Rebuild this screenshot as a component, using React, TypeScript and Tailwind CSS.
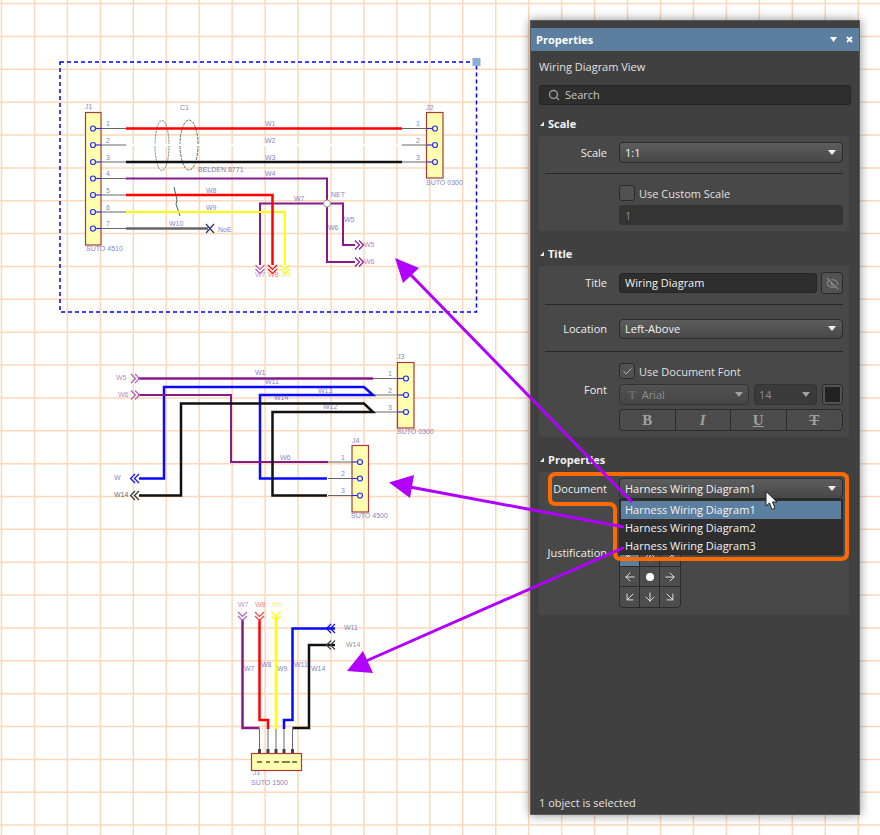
import { ReactNode } from "react";
import {
  ArrowDown,
  ArrowDownLeft,
  ArrowDownRight,
  ArrowLeft,
  ArrowRight,
  ArrowUp,
  ArrowUpLeft,
  ArrowUpRight,
  Check,
  EyeOff,
  Search,
} from "lucide-react";

const RED = "#ff0000";
const PURPLE = "#861a8c";
const BLUE = "#0a0aff";
const BLACK = "#111111";
const YELLOW = "#ffff00";
const GREY = "#666666";
const LABEL = "#5050b0";

const gridX = Array.from({ length: 27 }, (_, i) => 1.5 + i * 32.95);
const gridY = Array.from({ length: 26 }, (_, i) => 3.6 + i * 32.86);

// wires: [colour, width, points]
const wires: [string, number, string][] = [
  // top diagram
  [RED, 2.5, "126,128.5 402,128.5"],
  ["#ffffff", 2, "126,145 402,145"],
  [BLACK, 2.5, "126,162 402,162"],
  [PURPLE, 2, "126,178.5 327,178.5 327,262 355,262"],
  [PURPLE, 2, "260,265 260,203.5 343,203.5 343,245 355,245"],
  [YELLOW, 2, "126,212 285,212 285,265"],
  [RED, 2.5, "126,195 272.5,195 272.5,265"],
  [GREY, 2.5, "126,228.5 208,228.5"],
  // middle diagram
  [PURPLE, 2.5, "138,378.5 373,378.5"],
  [BLUE, 2.5, "139,478.5 164,478.5 164,387 364,387 373,395 260,395 260,478.5 327,478.5"],
  [PURPLE, 2, "138,395 231,395 231,462 328,462"],
  [BLACK, 2.5, "139,495.5 181,495.5 181,403.5 364,403.5 373,412 272.5,412 272.5,495.5 327,495.5"],
  // bottom diagram
  [PURPLE, 2.5, "242.5,619 242.5,728 259.5,728"],
  [RED, 2.5, "259.5,619 259.5,720 268,720 268,729"],
  [YELLOW, 2.5, "276,617 276,729"],
  [BLUE, 2.5, "335,628.5 292.5,628.5 292.5,720 284,720 284,729"],
  [BLACK, 2.5, "335,645 309,645 309,728 292.5,728"],
];

// thin grey stubs
const stubs = [
  "101,128.5 126,128.5", "101,145 126,145", "101,162 126,162", "101,178.5 126,178.5",
  "101,195 126,195", "101,212 126,212", "101,228.5 126,228.5",
  "402,128.5 427,128.5", "402,145 427,145", "402,162 427,162",
  "373,378.5 398,378.5", "373,395 398,395", "373,412 398,412",
  "328,462 352,462", "328,478.5 352,478.5", "328,495.5 352,495.5",
  "259.5,729 259.5,752", "268,729 268,752", "276,729 276,752", "284,729 284,752", "292.5,729 292.5,752",
];

const connectors = [
  { x: 85.5, y: 112.5, w: 15.5, h: 132.5 },
  { x: 426.5, y: 112.5, w: 16.5, h: 65.5 },
  { x: 397.5, y: 362.5, w: 16.5, h: 65.5 },
  { x: 352, y: 445.5, w: 16.5, h: 66.5 },
  { x: 251.5, y: 753.5, w: 50, h: 17 },
];

const pins: [number, number, number][] = [
  ...[128.5, 145, 162, 178.5, 195, 212, 228.5].map((y) => [93, y, 101] as [number, number, number]),
  ...[128.5, 145, 162].map((y) => [435, y, 427] as [number, number, number]),
  ...[378.5, 395, 412].map((y) => [406, y, 398] as [number, number, number]),
  ...[462, 478.5, 495.5].map((y) => [360, y, 352] as [number, number, number]),
];

// chevrons: [x, y, direction, colour]
const chevrons: [number, number, "r" | "l" | "d", string][] = [
  [355, 245, "r", PURPLE],
  [355, 262, "r", PURPLE],
  [260, 265, "d", "#b060b8"],
  [272.5, 265, "d", RED],
  [285, 265, "d", YELLOW],
  [131, 378.5, "r", "#b060b8"],
  [131, 395, "r", "#b060b8"],
  [139, 478.5, "l", BLUE],
  [139, 495.5, "l", "#333333"],
  [242.5, 612, "d", "#b060b8"],
  [259.5, 612, "d", "#ff4040"],
  [276, 612, "d", YELLOW],
  [335, 628.5, "l", BLUE],
  [335, 645, "l", "#444444"],
];

const labels: [number, number, string, string?][] = [
  [85, 109, "J1"], [180, 110, "C1"], [426, 110, "J2"],
  [106, 126, "1"], [106, 143, "2"], [106, 160, "3"], [106, 176, "4"], [106, 193, "5"], [106, 210, "6"], [106, 226, "7"],
  [416, 126, "1"], [416, 143, "2"], [416, 160, "3"],
  [265, 126, "W1"], [265, 143, "W2"], [265, 160, "W3"], [265, 176, "W4"],
  [206, 193, "W8"], [206, 210, "W9"], [169, 226, "W10"], [294, 201, "W7"], [331, 197, "NET"],
  [344, 222, "W5"], [328, 230, "W6"], [218, 232, "NoE"],
  [198, 172, "BELDEN 8771", "#444488"], [86, 251, "SUTO 4510"], [426, 185, "SUTO 0300"],
  [364, 247, "W5", "#a050b0"], [364, 264, "W6", "#a050b0"],
  [255, 277, "W7", "#c070d0"], [268, 277, "W8", "#ff5050"], [281, 277, "W9", "#e8e840"],
  [255, 375, "W1"], [265, 384, "W11"], [318, 393, "W13"], [274, 400, "W14"], [323, 409, "W12"],
  [388, 376, "1"], [388, 393, "2"], [388, 410, "3"], [341, 460, "1"], [341, 476, "2"], [341, 493, "3"],
  [280, 460, "W6"], [116, 380, "W5", "#a050b0"], [118, 397, "W6", "#a050b0"],
  [114, 480, "W"], [114, 497, "W14", "#333333"],
  [397, 359, "J3"], [352, 443, "J4"], [397, 434, "SUTO 0300"], [351, 518, "SUTO 4500"],
  [238, 607, "W7", "#b060b8"], [255, 607, "W8", "#ff5050"], [272, 607, "W9", "#e8e840"],
  [344, 630, "W11"], [346, 647, "W14", "#666666"],
  [244, 671, "W7"], [261, 667, "W8"], [277, 671, "W9"], [294, 667, "W11"], [311, 671, "W14"],
  [253, 775, "J1"], [251, 785, "SUTO 1500"],
];

function Chevron({ x, y, dir, color }: { x: number; y: number; dir: "r" | "l" | "d"; color: string }) {
  const rotate = dir === "r" ? 0 : dir === "l" ? 180 : 90;
  return (
    <g transform={`translate(${x} ${y}) rotate(${rotate})`} fill="none" stroke={color} strokeWidth="1.2">
      <path d="M0 -4.5 L4.5 0 L0 4.5" />
      <path d="M4 -4.5 L8.5 0 L4 4.5" />
    </g>
  );
}

function Canvas() {
  return (
    <svg className="absolute inset-0" width="880" height="835">
      {gridX.map((x) => (
        <line key={x} x1={x} x2={x} y1="0" y2="835" stroke="#fdd8ba" strokeWidth="1.5" />
      ))}
      {gridY.map((y) => (
        <line key={y} x1="0" x2="880" y1={y} y2={y} stroke="#fdd8ba" strokeWidth="1.5" />
      ))}

      <rect x="60" y="62" width="416.5" height="250" fill="none" stroke="#0000ff" strokeWidth="1.5" strokeDasharray="4 3" />
      <rect x="473" y="58.5" width="7" height="7" fill="#86b2d6" stroke="#8fa8e0" />

      <ellipse cx="162" cy="145.5" rx="7" ry="25" fill="none" stroke="#5a7a90" strokeDasharray="2 1" />
      <ellipse cx="189" cy="145" rx="9" ry="25" fill="none" stroke="#4f7a4f" strokeDasharray="3 1" />
      <path d="M174 187 L177 200 L176 204 L180 216" fill="none" stroke="#3c6a5a" />

      {stubs.map((p) => (
        <polyline key={p} points={p} fill="none" stroke="#666666" />
      ))}
      {wires.map(([color, width, points]) => (
        <polyline key={points} points={points} fill="none" stroke={color} strokeWidth={width} />
      ))}

      <path d="M206 224 L214 233 M214 224 L206 233" stroke="#333366" strokeWidth="1.3" />
      <circle cx="327" cy="203.5" r="3.5" fill="#ffffff" stroke="#999999" />

      {chevrons.map(([x, y, dir, color]) => (
        <Chevron key={`${x}-${y}`} x={x} y={y} dir={dir} color={color} />
      ))}

      {connectors.map((c) => (
        <rect key={c.x} x={c.x} y={c.y} width={c.w} height={c.h} fill="#ffffb0" stroke="#a83a3a" strokeWidth="1.2" />
      ))}
      {pins.map(([x, y, edge]) => (
        <g key={`${x}-${y}`} fill="none" stroke="#2a2aff" strokeWidth="1.2">
          <circle cx={x} cy={y} r="2.5" fill="#ffffb0" />
          <line x1={x < edge ? x + 2.5 : x - 2.5} x2={edge} y1={y} y2={y} />
        </g>
      ))}
      {[259.5, 268, 276, 284, 292.5].map((x) => (
        <rect key={x} x={x - 1.5} y="749" width="3" height="4" fill="#444444" />
      ))}
      <path d="M257 762 H262 M266 762 H270 M274 762 H279 M282 762 H290 M292 762 H297" stroke="#555533" strokeWidth="1.5" />

      {labels.map(([x, y, text, color], i) => (
        <text
          key={i}
          x={x}
          y={y}
          fontSize="7"
          fill={color ?? LABEL}
          opacity="0.7"
          className="font-['Liberation_Sans',sans-serif]"
        >
          {text}
        </text>
      ))}
    </svg>
  );
}

function Overlay() {
  return (
    <svg className="absolute inset-0 z-20 pointer-events-none" width="880" height="835">
      <path
        d="M556 474 H841 Q847 474 847 480 V553 Q847 559 841 559 H621 Q615 559 615 553 V510 Q615 504 609 504 H556 Q550 504 550 498 V480 Q550 474 556 474 Z"
        fill="none"
        stroke="#ff6a00"
        strokeWidth="4"
      />
      <g stroke="#b000ff" strokeWidth="3">
        <line x1="632" y1="502" x2="409" y2="273" />
        <line x1="624" y1="527" x2="410" y2="487" />
        <line x1="624" y1="547.5" x2="366" y2="661" />
      </g>
      <g fill="#b000ff">
        <polygon points="395,258 419,268 403,283" />
        <polygon points="389,482.5 414,475 410,498" />
        <polygon points="347,671 363,651 373,673" />
      </g>
      <path
        d="M766 491.5 L766 506 L769.5 503 L772 509.5 L775 508.2 L772.5 502 L777 502 Z"
        fill="#ffffff"
        stroke="#222222"
        strokeWidth="1"
      />
    </svg>
  );
}

function Caret({ muted }: { muted?: boolean }) {
  return (
    <svg width="8" height="5" viewBox="0 0 8 5">
      <path d="M0 0 H8 L4 5 Z" fill={muted ? "#a0a0a0" : "#f0f0f0"} />
    </svg>
  );
}

function Select({ value, className = "h-[21px]" }: { value: string; className?: string }) {
  return (
    <div className={`${className} w-full flex items-center justify-between pl-[5px] pr-[6px] rounded-[4px] border border-[#2b2b2b] bg-gradient-to-b from-[#5e5e5e] to-[#474747] text-[#f2f2f2]`}>
      <span>{value}</span>
      <Caret />
    </div>
  );
}

function Row({ label, children, className = "" }: { label: string; children: ReactNode; className?: string }) {
  return (
    <div className={`flex items-center pl-0 ${className}`}>
      <div className="w-[68px] text-right text-[#eeeeee] mr-[12px]">{label}</div>
      <div className="w-[224px]">{children}</div>
    </div>
  );
}

function Divider({ className }: { className: string }) {
  return <div className={`h-px mx-[6px] bg-[#262626] ${className}`} />;
}

function SectionHead({ title, className }: { title: string; className: string }) {
  return (
    <div className={`flex items-end pb-[5px] ${className}`}>
      <div className="flex items-center h-[16px] font-bold text-[#f2f2f2]">
        <svg width="9" height="6" viewBox="0 0 9 6">
          <path d="M1 6 H5 V1.5 Z" fill="#e8e8e8" />
        </svg>
        {title}
      </div>
    </div>
  );
}

function Checkbox({ checked, label }: { checked?: boolean; label: string }) {
  return (
    <div className="flex items-center h-[16px]">
      <div className="w-[16px] h-[16px] flex items-center justify-center rounded-[3px] border border-[#2b2b2b] bg-[#515151]">
        {checked && <Check size={11} color="#e8e8e8" strokeWidth={1.5} />}
      </div>
      <span className="ml-[4px] text-[#e0e0e0]">{label}</span>
    </div>
  );
}

function Card({ className, children }: { className: string; children: ReactNode }) {
  return <div className={`w-[310px] rounded-[3px] bg-[#484848] ${className}`}>{children}</div>;
}

const arrowCells = [ArrowUpLeft, ArrowUp, ArrowUpRight, ArrowLeft, null, ArrowRight, ArrowDownLeft, ArrowDown, ArrowDownRight];

function JustifyGrid() {
  return (
    <div className="w-[62px] h-[62px] grid grid-cols-3 grid-rows-3 rounded-[4px] overflow-hidden border border-[#2b2b2b] bg-[#4d4d4d]">
      {arrowCells.map((Icon, i) => (
        <div
          key={i}
          className={`flex items-center justify-center border-[#2b2b2b] ${i % 3 !== 2 ? "border-r" : ""} ${i < 6 ? "border-b" : ""} ${i === 0 ? "bg-[#5d7f9f]" : ""}`}
        >
          {Icon ? <Icon size={14} color="#f4f4f4" strokeWidth={1.5} /> : <div className="w-[8px] h-[8px] rounded-full bg-white" />}
        </div>
      ))}
    </div>
  );
}

function Panel() {
  return (
    <div className="relative w-[330px] h-[795px] flex flex-col border border-[#5c5c5c] bg-[#404040] pt-[7px] text-[11px] leading-[17px] shadow-[0_0_10px_rgba(0,0,0,0.45)]">
      <div className="h-[23px] shrink-0 flex items-center justify-between pl-[5px] pr-[6px] pb-[1px] bg-[#5d7f9f] text-white font-bold">
        <span>Properties</span>
        <div className="flex items-center gap-[9px]">
          <svg width="7" height="5" viewBox="0 0 7 5">
            <path d="M0 0 H7 L3.5 5 Z" fill="#ffffff" />
          </svg>
          <svg width="7" height="7" viewBox="0 0 7 7">
            <path d="M1 1 L6 6 M6 1 L1 6" stroke="#ffffff" strokeWidth="1.8" />
          </svg>
        </div>
      </div>

      <div className="px-[8px] flex-1 flex flex-col">
        <div className="h-[34px] pb-[3px] flex items-center text-[#e0e0e0]">Wiring Diagram View</div>
        <div className="h-[20px] flex items-center pl-[8px] pb-[1px] rounded-[3px] border border-[#262626] bg-[#2e2e2e] text-[#c8c8c8]">
          <Search size={12} color="#9a9a9a" strokeWidth={3} />
          <span className="ml-[5px]">Search</span>
        </div>

        <SectionHead title="Scale" className="h-[31px]" />
        <Card className="h-[95px] pt-[6px]">
          <Row label="Scale">
            <Select value="1:1" />
          </Row>
          <Divider className="mt-[10px]" />
          <div className="mt-[11px] pl-[80px]">
            <Checkbox label="Use Custom Scale" />
            <div className="mt-[4px] w-[224px] h-[20px] pl-[6px] flex items-center rounded-[3px] bg-[#343434] text-[#8a8a8a]">1</div>
          </div>
        </Card>

        <SectionHead title="Title" className="h-[35px]" />
        <Card className="h-[171px] pt-[6px]">
          <Row label="Title" className="[&>div:first-child]:pb-[2px]">
            <div className="flex items-center justify-between">
              <div className="w-[198px] h-[20px] pl-[5px] pb-[1px] flex items-center rounded-[3px] border border-[#262626] bg-[#2e2e2e] text-[#f2f2f2]">
                Wiring Diagram
              </div>
              <div className="w-[22px] h-[22px] flex items-center justify-center rounded-[3px] border border-[#2b2b2b] bg-[#525252]">
                <EyeOff size={13} color="#8e8e8e" />
              </div>
            </div>
          </Row>
          <Divider className="mt-[10px]" />
          <Row label="Location" className="mt-[14px] [&>div:first-child]:pb-[2px]">
            <Select value="Left-Above" className="h-[20px] pb-[1px]" />
          </Row>
          <Divider className="mt-[12px]" />
          <div className="mt-[11px] flex items-start">
            <div className="w-[68px] mr-[12px] mt-[18px] text-right text-[#eeeeee]">Font</div>
            <div className="w-[224px]">
              <Checkbox checked label="Use Document Font" />
              <div className="mt-[5px] h-[21px] flex items-center justify-between">
                <div className="w-[130px] h-[21px] flex items-center justify-between pl-[8px] pr-[5px] rounded-[4px] border border-[#333333] bg-gradient-to-b from-[#525252] to-[#464646] text-[#8e8e8e]">
                  <span className="flex items-center">
                    <span className="font-['Liberation_Serif',serif] font-bold text-[13px] text-[#6a6a6a] mr-[5px]">T</span>
                    Arial
                  </span>
                  <Caret muted />
                </div>
                <div className="w-[63px] h-[21px] flex items-center justify-between pl-[4px] pr-[6px] rounded-[4px] border border-[#333333] bg-[#3a3a3a] text-[#8e8e8e]">
                  14
                  <Caret muted />
                </div>
                <div className="w-[21px] h-[21px] flex items-center justify-center rounded-[3px] border border-[#2b2b2b] bg-[#525252]">
                  <div className="w-[15px] h-[15px] bg-[#222222]" />
                </div>
              </div>
              <div className="mt-[4px] h-[22px] grid grid-cols-4 rounded-[4px] border border-[#2b2b2b] bg-[#4c4c4c] text-[#a0a0a0] font-['Liberation_Serif',serif] text-[15px] font-bold">
                <div className="flex items-center justify-center border-r border-[#2b2b2b]">B</div>
                <div className="flex items-center justify-center border-r border-[#2b2b2b] italic">I</div>
                <div className="flex items-center justify-center border-r border-[#2b2b2b] underline">U</div>
                <div className="flex items-center justify-center line-through">T</div>
              </div>
            </div>
          </div>
        </Card>

        <SectionHead title="Properties" className="h-[35px]" />
        <Card className="h-[143px] pt-[6px]">
          <Row label="Document">
            <div className="relative">
              <Select value="Harness Wiring Diagram1" />
              <div className="absolute top-full left-0 w-full h-[56px] z-10 flex flex-col p-px border border-[#2b2b2b] bg-[#2e2e2e] text-[#f2f2f2]">
                <div className="h-[18px] pl-[4px] pb-[2px] flex items-center bg-[#5d7f9f]">Harness Wiring Diagram1</div>
                <div className="h-[18px] pl-[4px] pb-[1px] flex items-center">Harness Wiring Diagram2</div>
                <div className="h-[18px] pl-[4px] flex items-center">Harness Wiring Diagram3</div>
              </div>
            </div>
          </Row>
          <div className="mt-[47px] flex items-start">
            <div className="w-[68px] mr-[12px] text-right leading-[14px] text-[#eeeeee]">Justification</div>
            <JustifyGrid />
          </div>
        </Card>

        <div className="mt-auto h-[20px] text-[#e0e0e0]">1 object is selected</div>
      </div>
    </div>
  );
}

export default function App() {
  return (
    <div className="relative w-[880px] h-[835px] overflow-hidden bg-white font-['Open_Sans',sans-serif]">
      <Canvas />
      <div className="relative flex justify-end pt-[20px] pr-[20px]">
        <Panel />
      </div>
      <Overlay />
    </div>
  );
}
